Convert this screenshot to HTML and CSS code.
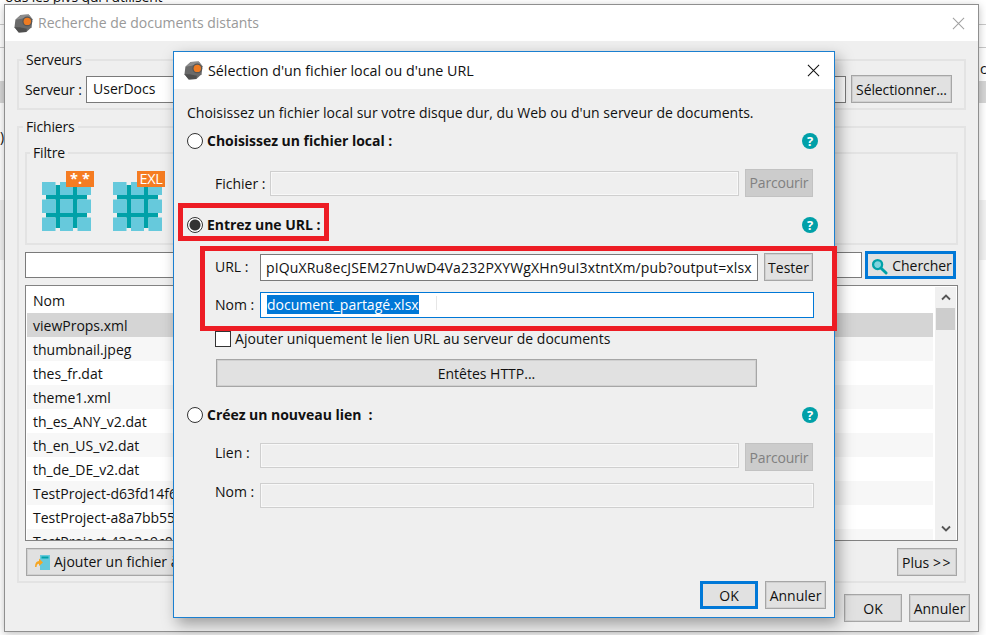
FILE: index.html
```html
<!DOCTYPE html>
<html lang="fr">
<head>
<meta charset="utf-8">
<title>Sélection d'un fichier local ou d'une URL</title>
<link rel="stylesheet" href="styles.css">
</head>
<body>
<svg class="defs" width="0" height="0" aria-hidden="true">
  <defs>
    <symbol id="logo" viewBox="0 0 20 20">
      <path d="M7 1 15.500 .5 19.500 5.500 18.500 14 13 19 5 19.500 .5 14 1.500 6Z" fill="#6a6a6a"/>
      <path d="M7 1 15.500 .5 19.500 5.500 14 3 8 5 1.500 6Z" fill="#8d8d8d"/>
      <path d="M.5 14 5 19.500 13 19 13.500 15.500 6 14Z" fill="#4f4f4f"/>
      <circle cx="14" cy="7.800" r="5.200" fill="#565656"/>
      <circle cx="14" cy="7.800" r="3.900" fill="#ee7b22"/>
    </symbol>
    <symbol id="grid" viewBox="0 0 49 49">
      <path d="M4 13h41v4.500H4zM4 31h41v4.500H4zM13.500 3H18v43h-4.500zM31 3h4.500v43H31z" fill="#00a1a8"/>
      <path d="M0 0h13.500v13H0zM18 0h13v13H18zM35.500 0H49v13H35.500zM0 17.500h13.500V31H0zM18 17.500h13V31H18zM35.500 17.500H49V31H35.500zM0 35.500h13.500V49H0zM18 35.500h13V49H18zM35.500 35.500H49V49H35.500z" fill="#66c9dc"/>
    </symbol>
  </defs>
</svg>

<div class="desk">
  <p class="desk-text">ous les pivs qui l'utilisent</p>
  <span class="desk-paren">)</span>
  <span class="desk-c">c</span>
</div>

<section class="win win-back">
  <header class="back-title">
    <svg class="logo"><use href="#logo"/></svg>
    <span>Recherche de documents distants</span>
    <svg class="back-close" viewBox="0 0 14 14"><path d="M1 1 13 13M13 1 1 13" stroke="#a0a0a0" stroke-width="1.100" fill="none"/></svg>
  </header>
  <div class="back-body">
    <fieldset class="group group-servers">
      <legend>Serveurs</legend>
      <div class="server-row">
        <label class="server-label">Serveur :</label>
        <div class="combo">UserDocs</div>
        <button class="btn btn-select">Sélectionner...</button>
      </div>
    </fieldset>
    <fieldset class="group group-files">
      <legend>Fichiers</legend>
      <fieldset class="group group-filter">
        <legend>Filtre</legend>
        <div class="filters">
          <div class="filter"><svg class="grid"><use href="#grid"/></svg><span class="badge badge-all">*.*</span></div>
          <div class="filter"><svg class="grid"><use href="#grid"/></svg><span class="badge">EXL</span></div>
        </div>
      </fieldset>
      <div class="search-row">
        <div class="search-input"></div>
        <button class="btn btn-search">
          <svg class="ico-search" viewBox="0 0 18 18"><circle cx="7" cy="7" r="4.800" fill="#7fd3de" stroke="#00a1a8" stroke-width="2.400"/><path d="M10.500 10.500 16 16" stroke="#00a1a8" stroke-width="3" stroke-linecap="round"/></svg>
          Chercher
        </button>
      </div>
      <div class="list">
        <div class="rows">
          <div class="row row-head">Nom</div>
          <div class="row row-sel">viewProps.xml</div>
          <div class="row">thumbnail.jpeg</div>
          <div class="row">thes_fr.dat</div>
          <div class="row">theme1.xml</div>
          <div class="row">th_es_ANY_v2.dat</div>
          <div class="row">th_en_US_v2.dat</div>
          <div class="row">th_de_DE_v2.dat</div>
          <div class="row">TestProject-d63fd14f6</div>
          <div class="row">TestProject-a8a7bb55c</div>
          <div class="row">TestProject-42a3a9c0</div>
        </div>
        <div class="scroll">
          <svg class="arrow" viewBox="0 0 12 8"><path d="M2 6.500 6 2.500 10 6.500" stroke="#555" stroke-width="1.800" fill="none"/></svg>
          <div class="thumb"></div>
          <svg class="arrow arrow-down" viewBox="0 0 12 8"><path d="M2 1.500 6 5.500 10 1.500" stroke="#555" stroke-width="1.800" fill="none"/></svg>
        </div>
      </div>
      <div class="list-actions">
        <button class="btn btn-add">
          <svg class="ico-add" viewBox="0 0 16 16"><path d="M6 1h10v15H6z" fill="#66c9dc"/><path d="M7.500 2.500h7v2h-7z" fill="#00a1a8"/><path d="M1 13c0-4 1.500-6 4-6V4.500L9 8.500 5 12V9.800c-1.500 0-2.300 1.200-2.500 3.200Z" fill="#f6a623"/></svg>
          Ajouter un fichier à
        </button>
        <button class="btn btn-more">Plus&nbsp;<span class="chev">&gt;&gt;</span></button>
      </div>
    </fieldset>
    <div class="back-footer">
      <button class="btn btn-ok">OK</button>
      <button class="btn btn-cancel">Annuler</button>
    </div>
  </div>
</section>

<section class="win win-front">
  <header class="front-title">
    <svg class="logo"><use href="#logo"/></svg>
    <span>Sélection d'un fichier local ou d'une URL</span>
    <svg class="front-close" viewBox="0 0 14 14"><path d="M1 1 13 13M13 1 1 13" stroke="#111" stroke-width="1.100" fill="none"/></svg>
  </header>
  <div class="front-body">
    <p class="intro">Choisissez un fichier local sur votre disque dur, du Web ou d'un serveur de documents.</p>

    <div class="opt opt-first">
      <span class="radio"></span><strong>Choisissez un fichier local :</strong>
      <span class="help">?</span>
    </div>
    <div class="field field-btn">
      <label class="lab lab-wide">Fichier :</label>
      <div class="input input-off"></div>
      <button class="btn btn-off btn-off-first">Parcourir</button>
    </div>

    <div class="opt">
      <span class="radio radio-on"></span><strong>Entrez une URL :</strong>
      <span class="help">?</span>
    </div>
    <div class="field field-btn">
      <label class="lab">URL :</label>
      <div class="input input-url">pIQuXRu8ecJSEM27nUwD4Va232PXYWgXHn9uI3xtntXm/pub?output=xlsx</div>
      <button class="btn btn-test">Tester</button>
    </div>
    <div class="field field-name">
      <label class="lab">Nom :</label>
      <div class="input input-focus"><span class="sel">document_partagé.xlsx</span><span class="ibeam"></span></div>
    </div>
    <div class="check-row">
      <span class="check"></span>Ajouter uniquement le lien URL au serveur de documents
    </div>
    <button class="btn btn-headers">Entêtes HTTP...</button>

    <div class="opt">
      <span class="radio"></span><strong>Créez un nouveau lien&nbsp; :</strong>
      <span class="help">?</span>
    </div>
    <div class="field field-btn field-top">
      <label class="lab lab-up">Lien :</label>
      <div class="input input-off"></div>
      <button class="btn btn-off">Parcourir</button>
    </div>
    <div class="field field-link-name">
      <label class="lab lab-up">Nom :</label>
      <div class="input input-off"></div>
    </div>

    <div class="front-footer">
      <button class="btn btn-primary">OK</button>
      <button class="btn btn-cancel2">Annuler</button>
    </div>
  </div>
  <div class="mark mark-radio"></div>
  <div class="mark mark-fields"></div>
</section>
</body>
</html>
```

FILE: styles.css
```css
* { box-sizing: border-box; }
html, body { margin: 0; padding: 0; height: 100%; }
body {
  position: relative;
  overflow: hidden;
  width: 986px;
  height: 635px;
  background: #fff;
  color: #111;
  font: 14px/20px "Open Sans", "Noto Sans", sans-serif;
}
.defs { position: absolute; }

/* desktop fragments behind the windows */
.desk {
  position: absolute;
  inset: 0;
  background:
    linear-gradient(#c9c9c9, #c9c9c9) 0 47px / 100% 1px no-repeat,
    linear-gradient(#c9c9c9, #c9c9c9) 0 24px / 100% 1px no-repeat,
    linear-gradient(#d6d6d6, #d6d6d6) 0 81px / 100% 22px no-repeat,
    linear-gradient(#f2f2f2, #f2f2f2) 0 200px / 100% 60px no-repeat,
    #fff;
}
.desk-text { position: absolute; left: 5px; top: -13px; margin: 0; letter-spacing: -.15px; }
.desk-paren { position: absolute; left: 0; top: 127px; }
.desk-c { position: absolute; left: 980px; top: 59px; }

/* windows */
.win { position: absolute; background: #efefef; }
.win-back {
  left: 4px; top: 4px; width: 975px; height: 628px;
  border: 1px solid #8f8f8f;
  box-shadow: 0 2px 8px rgba(0, 0, 0, .25);
}
.win-front {
  left: 173px; top: 51px; width: 662px; height: 567px;
  border: 1px solid #1a7fd0;
  box-shadow: 4px 6px 14px rgba(0, 0, 0, .35);
  display: flex;
  flex-direction: column;
}
.logo { width: 19px; height: 19px; flex: none; }

.back-title {
  height: 36px;
  background: #fff;
  color: #999;
  display: flex;
  align-items: center;
  padding: 0 12px 0 9px;
  gap: 5px;
}
.back-close { width: 13px; height: 13px; margin-left: auto; margin-right: 1px; }
.back-body { padding: 9px 12px 0; position: relative; height: 590px; }

/* groups */
.group {
  margin: 0;
  padding: 0;
  border: 2px solid #e3e3e3;
  min-width: 0;
}
.group > legend { padding: 0 3px; margin-left: 4px; line-height: 20px; letter-spacing: -.15px; }
.group-servers { height: 60px; }
.server-row { display: flex; align-items: center; height: 28px; margin-top: 5px; padding-left: 6px; }
.server-label { width: 61px; letter-spacing: -.1px; padding-top: 2px; }
.combo {
  width: 760px; height: 27px;
  border: 1px solid #7a7a7a;
  background: #fff;
  padding: 2px 6px;
}
.btn {
  border: 1px solid #a6a6a6;
  box-shadow: inset 0 0 0 1px #d0d0d0;
  background: #e1e1e1;
  color: #111;
  font: inherit;
  padding: 2px 0 0;
  height: 28px;
  display: flex;
  align-items: center;
  justify-content: center;
  white-space: nowrap;
}
.btn-select { width: 101px; margin-left: 5px; letter-spacing: -.1px; }

.group-files { height: 466px; margin-top: 7px; padding: 0 6px; }
.group-files > legend { margin-left: -2px; }
.group-filter { height: 102px; margin-top: 6px; }
.group-filter > legend { margin-left: 3px; }
.filters { display: flex; gap: 22px; padding: 19px 0 0 15px; }
.filter { position: relative; width: 49px; height: 49px; }
.grid { width: 49px; height: 49px; display: block; }
.badge {
  position: absolute; left: 24px; top: -11px;
  width: 28px; height: 16px;
  background: #f57c22;
  color: #fff;
  font-size: 14.500px;
  line-height: 16px;
  letter-spacing: -.4px;
  text-align: center;
}
.badge-all { font-weight: 700; line-height: 15px; letter-spacing: 0; }

.search-row { display: flex; align-items: center; height: 28px; margin-top: 6px; }
.search-input { width: 837px; height: 26px; border: 1px solid #7a7a7a; background: #fff; }
.btn-search { width: 91px; margin-left: 3px; border: 3px solid #0078d7; box-shadow: none; gap: 4px; padding-left: 2px; letter-spacing: -.05px; }
.ico-search { width: 17px; height: 17px; }

.list {
  display: flex;
  width: 933px;
  height: 256px;
  margin-top: 6px;
  border: 1px solid #828282;
  background: #fff;
  overflow: hidden;
}
.rows { flex: 1; min-width: 0; padding: 2px 2px 0 1px; overflow: hidden; }
.row { height: 24px; line-height: 26px; padding-left: 6px; white-space: nowrap; background: #fff; }
.row:nth-child(odd) { background: #f7f7f7; }
.row.row-head { height: 25px; background: #fff; }
.row.row-sel { background: #d5d5d5; }
.scroll {
  width: 21px;
  flex: none;
  background: #f0f0f0;
  display: flex;
  flex-direction: column;
  align-items: center;
  margin: 1px 1px 0 0;
}
.arrow { width: 12px; height: 8px; margin-top: 6px; }
.thumb { width: 19px; height: 22px; background: #cdcdcd; margin-top: 7px; }
.arrow-down { margin-top: auto; margin-bottom: 7px; }

.list-actions { display: flex; justify-content: space-between; margin-top: 7px; padding-left: 1px; }
.btn-add { width: 200px; justify-content: flex-start; padding-left: 7px; padding-top: 0; gap: 4px; }
.ico-add { width: 16px; height: 16px; }
.btn-more { width: 60px; margin-right: 1px; }
.chev { letter-spacing: 1.500px; }

.back-footer { display: flex; justify-content: flex-end; gap: 7px; position: absolute; right: 8px; top: 553px; }
.btn-ok { width: 58px; }
.btn-cancel { width: 61px; }

/* front dialog */
.front-title {
  height: 37px;
  flex: none;
  background: #fff;
  display: flex;
  align-items: center;
  gap: 5px;
  padding: 0 0 0 10px;
  font-size: 14.300px;
}
.front-close { width: 13px; height: 13px; margin-left: auto; margin-right: 14px; }
.front-body {
  flex: 1;
  display: flex;
  flex-direction: column;
  padding: 14px 20px 8px 13px;
}
.intro { margin: 0; height: 20px; white-space: nowrap; }
.opt { display: flex; align-items: center; height: 22px; margin-top: 17px; }
.opt-first { margin-top: 7px; }
.opt strong { font-weight: 700; margin-left: 4px; letter-spacing: -.03px; }
.radio {
  width: 16px; height: 16px;
  border: 1px solid #333;
  border-radius: 50%;
  background: #fff;
  flex: none;
}
.radio-on { background: radial-gradient(circle, #333 0 5px, #fff 6px); }
.help {
  margin-left: auto;
  margin-right: -4px;
  width: 16px; height: 16px;
  border-radius: 50%;
  background: #00a0a8;
  color: #fff;
  font-weight: 700;
  font-size: 13px;
  line-height: 16px;
  text-align: center;
}
.field { display: flex; align-items: center; padding-left: 28px; margin-top: 17px; }
.field-btn { height: 28px; margin-right: 1px; }
.field-top .input { align-self: flex-start; }
.field-top .lab-up { padding-bottom: 9px; }
.field-name { height: 26px; margin-top: 11px; }
.field-link-name { height: 25px; margin-top: 12px; }
.lab { width: 45px; flex: none; }
.lab-wide { width: 55px; padding-top: 2px; }
.lab-up { padding-bottom: 7px; }
.input { flex: 1; min-width: 0; height: 25px; padding: 0 6px; line-height: 24px; white-space: nowrap; overflow: hidden; }
.input-off { border: 1px solid #cfcfcf; background: #efefef; box-shadow: inset 0 0 0 1px #f8f8f8; }
.input-url { height: 27px; line-height: 26px; border: 1px solid #7a7a7a; background: #fff; padding: 0 5px; letter-spacing: .15px; }
.input-focus { height: 26px; border: 1px solid #0078d7; background: #fff; line-height: 24px; }
.sel { background: #0078d7; color: #fff; display: inline-block; height: 19px; line-height: 19px; }
.ibeam { display: inline-block; width: 1px; height: 14px; margin-left: 17px; background: #e6e6e6; }
.btn-off { width: 68px; margin-left: 6px; background: #ccc; border-color: #c2c2c2; box-shadow: none; color: #808080; flex: none; letter-spacing: -.2px; }
.btn-off-first { padding-top: 0; }
.btn-test { width: 49px; margin-left: 6px; flex: none; }
.check-row { display: flex; align-items: center; height: 20px; margin-top: 11px; padding-left: 28px; letter-spacing: .03px; }
.check { width: 16px; height: 16px; border: 1px solid #333; background: #fff; margin-right: 4px; flex: none; }
.btn-headers { width: 541px; margin: 10px 0 0 29px; flex: none; }
.front-footer { margin-top: auto; display: flex; justify-content: flex-end; gap: 7px; margin-right: -12px; }
.btn-primary { width: 58px; border: 3px solid #0078d7; box-shadow: none; }
.btn-cancel2 { width: 61px; }

/* red annotations over the dialog */
.mark { position: absolute; border: 5px solid #ed1c24; pointer-events: none; }
.mark-radio { left: 4px; top: 151px; width: 151px; height: 38px; }
.mark-fields { left: 26px; top: 194px; width: 637px; height: 85px; }
```
